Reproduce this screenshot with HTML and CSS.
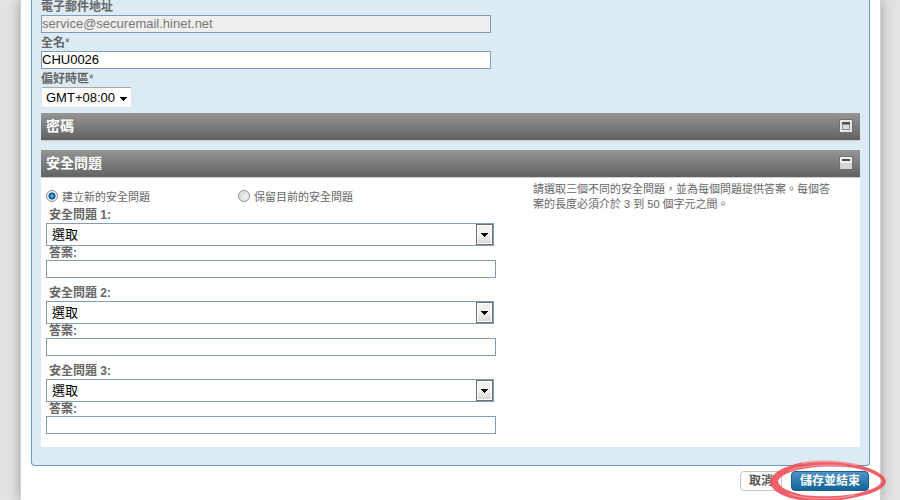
FILE: index.html
```html
<!DOCTYPE html>
<html lang="zh-Hant">

<head>
    <meta charset="UTF-8">
    <title>帳號設定</title>
    <link rel="stylesheet" href="styles.css">
</head>

<body>
    <form class="page">
        <div class="panel">
            <div class="profile">
                <div class="field">
                    <label for="email">電子郵件地址</label>
                    <input type="text" id="email" class="text-input" value="service@securemail.hinet.net" disabled>
                </div>
                <div class="field">
                    <label for="fullName">全名<span class="required">*</span></label>
                    <input type="text" id="fullName" class="text-input" value="CHU0026">
                </div>
                <div class="field">
                    <label for="timezone">偏好時區<span class="required">*</span></label>
                    <div class="timezone-box">
                        <select id="timezone" class="timezone-select">
                            <option>GMT+08:00</option>
                        </select>
                        <svg class="timezone-arrow" width="7" height="4" viewBox="0 0 7 4"><path d="M0 0h7v1H6v1H5v1H4v1H3V3H2V2H1V1H0z"/></svg>
                    </div>
                </div>
            </div>

            <section class="section">
                <div class="section-bar">
                    <h2>密碼</h2>
                    <button type="button" class="toggle-button" aria-label="展開">
                        <svg width="14" height="14" viewBox="0 0 14 14">
                            <rect width="14" height="14" fill="#707070"/>
                            <rect x="1" y="1" width="12" height="12" fill="#e6e6e9"/>
                            <rect x="3" y="3" width="8" height="8" fill="#8c8c8f"/>
                            <rect x="3" y="3" width="8" height="2" fill="#505057"/>
                            <rect x="4" y="6" width="6" height="4" fill="#dcdcdf"/>
                        </svg>
                    </button>
                </div>
            </section>

            <section class="section">
                <div class="section-bar">
                    <h2>安全問題</h2>
                    <button type="button" class="toggle-button" aria-label="收合">
                        <svg width="14" height="14" viewBox="0 0 14 14">
                            <rect width="14" height="14" fill="#707070"/>
                            <rect x="1" y="1" width="12" height="12" fill="#f0f0f2"/>
                            <rect x="1" y="7" width="12" height="6" fill="#d6d6da"/>
                            <rect x="3" y="3" width="8" height="2" fill="#4b4a58"/>
                        </svg>
                    </button>
                </div>
                <div class="section-body">
                    <div class="questions">
                        <div class="radio-row">
                            <label><input type="radio" name="mode" checked>建立新的安全問題</label>
                            <label><input type="radio" name="mode">保留目前的安全問題</label>
                        </div>
                        <div class="question">
                            <label for="question1">安全問題 1:</label>
                            <div class="select-box">
                                <select id="question1">
                                    <option>選取</option>
                                </select>
                                <span class="select-arrow"><svg width="7" height="4" viewBox="0 0 7 4"><path d="M0 0h7v1H6v1H5v1H4v1H3V3H2V2H1V1H0z"/></svg></span>
                            </div>
                            <label for="answer1">答案:</label>
                            <input type="text" id="answer1" class="text-input">
                        </div>
                        <div class="question">
                            <label for="question2">安全問題 2:</label>
                            <div class="select-box">
                                <select id="question2">
                                    <option>選取</option>
                                </select>
                                <span class="select-arrow"><svg width="7" height="4" viewBox="0 0 7 4"><path d="M0 0h7v1H6v1H5v1H4v1H3V3H2V2H1V1H0z"/></svg></span>
                            </div>
                            <label for="answer2">答案:</label>
                            <input type="text" id="answer2" class="text-input">
                        </div>
                        <div class="question">
                            <label for="question3">安全問題 3:</label>
                            <div class="select-box">
                                <select id="question3">
                                    <option>選取</option>
                                </select>
                                <span class="select-arrow"><svg width="7" height="4" viewBox="0 0 7 4"><path d="M0 0h7v1H6v1H5v1H4v1H3V3H2V2H1V1H0z"/></svg></span>
                            </div>
                            <label for="answer3">答案:</label>
                            <input type="text" id="answer3" class="text-input">
                        </div>
                    </div>
                    <p class="help">請選取三個不同的安全問題，並為每個問題提供答案。每個答案的長度必須介於 3 到 50 個字元之間。</p>
                </div>
            </section>
        </div>

        <div class="actions">
            <button type="button" class="button">取消</button>
            <button type="submit" class="button primary">儲存並結束</button>
            <svg class="marker" width="118" height="40" viewBox="0 0 118 40">
                <path fill="#ee4a54" fill-opacity=".88" fill-rule="evenodd" d="M1 21C3 12 18 5 36 2C54 0 75 1 90 5C105 9 115 14 117 21C117 28 105 33 92 36C76 40 62 42 48 42C32 41 16 38 8 32C3 28 1 25 1 21zM9 21C10 28 21 32 34 35C52 37 73 37 90 33C102 30 112 26 113 21C112 17 103 12 90 9C76 6 56 6 39 8C24 10 11 15 9 21z"/>
                <path fill="none" stroke="#f5a3a8" stroke-width="2" stroke-opacity=".8" d="M33 3C49 0 72 1 88 5"/>
                <path fill="none" stroke="#f8b6ba" stroke-width="1" stroke-opacity=".7" d="M20 11C34 5 60 4 78 6M20 34C38 40 66 40 86 35"/>
            </svg>
        </div>
    </form>
</body>

</html>
```

FILE: styles.css
```css
:root {
    --border-color: #7f9db9;
    --panel-color: #dceaf3;
    --text-color: #666;
}

* {
    box-sizing: border-box;
}

body {
    margin: 0;
    background-color: #e3e3e3;
    font-family: "Liberation Sans", "Noto Sans CJK TC", sans-serif;
    font-size: 12px;
    color: var(--text-color);
}

input,
select,
button {
    font-family: inherit;
    margin: 0;
}

.page {
    min-height: 100vh;
    margin: 0 19px 0 20px;
    padding: 0 10px 9px;
    background-color: #fff;
    border: solid #d0d0d0;
    border-width: 0 1px;
    box-shadow: 0 0 12px rgba(0, 0, 0, 0.3);
}

.panel {
    padding: 0 9px 18px;
    background-color: var(--panel-color);
    border: 1px solid #6699cc;
    border-top: none;
    border-radius: 0 0 4px 4px;
}

.profile {
    display: flex;
    flex-direction: column;
    gap: 3px;
    margin-bottom: 5px;
}

.field label,
.question label {
    display: block;
    height: 14px;
    line-height: 14px;
    font-weight: bold;
}

.field label {
    margin-bottom: 1px;
}

.required {
    font-weight: normal;
}

.text-input {
    display: block;
    width: 100%;
    height: 18px;
    padding: 0 0 1px;
    border: 1px solid var(--border-color);
    background-color: #fff;
    font-size: 13px;
    color: #000;
}

.field .text-input {
    width: 55%;
}

.text-input:disabled {
    background-color: #efefef;
    color: #777;
}

.timezone-box,
.select-box {
    position: relative;
}

.timezone-box {
    width: 91px;
}

.timezone-select {
    display: block;
    width: 100%;
    height: 21px;
    padding: 0 0 0 4px;
    appearance: none;
    border: 1px solid #e0e4e8;
    border-top-color: #aaa;
    border-radius: 2px;
    background-color: #fff;
    font-size: 13px;
    color: #000;
}

.timezone-arrow {
    position: absolute;
    top: 10px;
    right: 5px;
    pointer-events: none;
}

.section + .section {
    margin-top: 9px;
}

.section-bar {
    display: flex;
    align-items: center;
    justify-content: space-between;
    height: 28px;
    padding: 0 7px 1px 5px;
    background: linear-gradient(#959595, #626262);
    border-bottom: 1px solid #ccc;
}

.section-bar h2 {
    margin: 0;
    font-size: 14px;
    line-height: 20px;
    color: #fff;
}

.toggle-button {
    display: flex;
    padding: 0;
    border: none;
    background: none;
}

.section-body {
    display: flex;
    gap: 37px;
    padding: 4px 28px 13px 5px;
    background-color: #fff;
}

.questions {
    display: flex;
    flex: 0 1 450px;
    flex-direction: column;
    gap: 8px;
    padding-top: 4px;
}

.radio-row {
    display: grid;
    grid-template-columns: 192px 1fr;
    height: 14px;
    font-size: 11px;
}

.radio-row label {
    display: flex;
    align-items: center;
    gap: 4px;
    height: 20px;
}

.radio-row input {
    width: 12px;
    height: 12px;
    appearance: none;
    border: 1px solid #8a8f94;
    border-radius: 50%;
    background: radial-gradient(circle at 60% 60%, #f4f4f4, #c8cbce);
    box-shadow: inset 0 0 0 1px #f4f4f4;
}

.radio-row input:checked {
    background: radial-gradient(circle, #45b5e8 0 1px, #0b3d68 3px, #e8edf0 4px);
}

.question label {
    padding-left: 3px;
}

.question label:first-child {
    margin-bottom: 1px;
}

.select-box {
    width: calc(100% - 2px);
}

.select-box select {
    display: block;
    width: 100%;
    height: 23px;
    padding: 0 20px 0 5px;
    appearance: none;
    border: 1px solid var(--border-color);
    border-radius: 0;
    background-color: #fff;
    font-size: 13px;
    color: #000;
}

.select-arrow {
    position: absolute;
    top: 1px;
    right: 1px;
    bottom: 1px;
    display: flex;
    align-items: center;
    justify-content: center;
    width: 17px;
    border: 1px solid #707070;
    background: linear-gradient(#f2f2f2 50%, #d5d5d5);
    box-shadow: inset 0 0 0 1px #fff;
    pointer-events: none;
}

.help {
    flex: 1;
    margin: 0;
    font-size: 11px;
    line-height: 15px;
}

.actions {
    position: relative;
    display: flex;
    justify-content: flex-end;
    gap: 9px;
    margin-top: 5px;
    padding-right: 1px;
}

.button {
    height: 20px;
    padding: 0 8px;
    border: 1px solid #c4c4c4;
    border-radius: 4px;
    background-color: #fff;
    font-size: 12px;
    font-weight: bold;
    line-height: 18px;
    color: #555;
}

.button.primary {
    border-color: #1c5f93;
    background: linear-gradient(#4f93c8, #126497);
    color: #fff;
}

/* hand-drawn ring around the save button */
.marker {
    position: absolute;
    right: -17px;
    bottom: -9px;
    pointer-events: none;
}
```
